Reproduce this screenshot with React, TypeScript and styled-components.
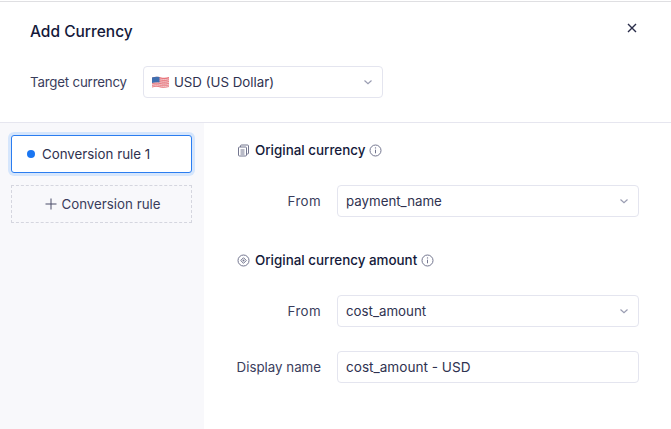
import React from "react";
import styled, { createGlobalStyle } from "styled-components";

const Global = createGlobalStyle`
  html, body { margin: 0; padding: 0; background: #fff; }
  body { font-family: Inter, "Liberation Sans", sans-serif; color: #2f3250; }
  * { box-sizing: border-box; }
`;

const Page = styled.div`
  width: 671px;
  height: 429px;
  overflow: hidden;
  padding-top: 1px;
  display: flex;
  flex-direction: column;
`;

const Header = styled.header`
  height: 122px;
  flex: none;
  border-top: 1px solid #dfdfe2;
  border-bottom: 1px solid #e6e6ef;
  padding: 20px 30px 0;
  position: relative;
`;

const Title = styled.h1`
  margin: 0;
  font-size: 15.5px;
  line-height: 20px;
  font-weight: 500;
  color: #14193a;
`;

const TargetRow = styled.div`
  display: flex;
  align-items: center;
  margin-top: 24px;
  gap: 16px;
`;

const Label = styled.span<{ $spacing?: number }>`
  font-size: 13.3px;
  line-height: 20px;
  color: #3a3d5c;
  white-space: nowrap;
  letter-spacing: ${(p) => p.$spacing ?? 0}px;
`;

const Close = styled.button`
  position: absolute;
  right: 32px;
  top: 19px;
  width: 14px;
  height: 14px;
  padding: 0;
  border: none;
  background: none;
  display: flex;
`;

const Select = styled.div<{ $width: number }>`
  width: ${(p) => p.$width}px;
  height: 32px;
  border: 1px solid #e4e5ef;
  border-radius: 4px;
  background: #fff;
  display: flex;
  align-items: center;
  padding: 0 8px;
  font-size: 13.3px;
  color: #2f3250;
  gap: 5px;
`;

const SelectText = styled.span`
  flex: 1;
  white-space: nowrap;
`;

const Body = styled.div`
  flex: 1;
  display: flex;
  min-height: 0;
`;

const Sidebar = styled.aside`
  width: 204px;
  flex: none;
  background: #f8f8fb;
  padding: 12px 12px 0 11px;
`;

const RuleCard = styled.div`
  height: 38px;
  width: 181px;
  border: 1px solid #2b7df0;
  border-radius: 3px;
  box-shadow: 0 0 0 3px #d6e6fc;
  background: #fff;
  display: flex;
  align-items: center;
  padding-left: 15px;
  gap: 7px;
  font-size: 13.3px;
  color: #2f3250;
`;

const Dot = styled.span`
  width: 8px;
  height: 8px;
  border-radius: 50%;
  background: #1a76f2;
`;

const AddRule = styled.div`
  margin-top: 12px;
  height: 38px;
  width: 181px;
  border: 1px dashed #d5d6df;
  display: flex;
  align-items: center;
  justify-content: center;
  gap: 5px;
  padding-left: 2px;
  font-size: 13.3px;
  color: #3a3d5c;
`;

const Content = styled.main`
  flex: 1;
  padding: 17px 32px 0 32px;
`;

const SectionHead = styled.div<{ $top?: number }>`
  display: flex;
  align-items: center;
  height: 20px;
  margin-top: ${(p) => p.$top ?? 0}px;
  font-size: 13.4px;
  font-weight: 500;
  color: #14193a;
`;

const SectionIcon = styled.svg`
  width: 13px;
  height: 13px;
  margin-left: 1px;
  margin-right: 5px;
  flex: none;
`;

const InfoIcon = styled.svg`
  width: 13px;
  height: 13px;
  margin-left: 4px;
  flex: none;
`;

const Field = styled.div<{ $top: number }>`
  display: grid;
  grid-template-columns: 85px 302px;
  column-gap: 16px;
  align-items: center;
  margin-top: ${(p) => p.$top}px;
`;

const FieldLabel = styled(Label)`
  text-align: right;
`;

const Input = styled.div`
  height: 32px;
  border: 1px solid #e4e5ef;
  border-radius: 4px;
  background: #fff;
  display: flex;
  align-items: center;
  padding: 0 8px;
  font-size: 13.6px;
  color: #2f3250;
`;

const Chevron = () => (
  <svg width="10" height="10" viewBox="0 0 10 10" fill="none" style={{ marginRight: 1 }}>
    <path d="M1.500 3.500 5 6.800l3.500-3.300" stroke="#9a9db2" strokeWidth="1.200" />
  </svg>
);

const Info = () => (
  <InfoIcon viewBox="0 0 13 13" fill="none">
    <circle cx="6.500" cy="6.500" r="5.500" stroke="#73768f" />
    <path d="M6.500 5.700v3.600" stroke="#73768f" />
    <circle cx="6.500" cy="3.900" r=".7" fill="#73768f" />
  </InfoIcon>
);

const Flag = () => (
  <svg width="17" height="13" viewBox="0 0 17 13">
    <path d="M0 1.500C3 .5 6 .5 8.500 1.200S14 2 17 1v10c-3 1-6 1-8.500.4S3 10.500 0 11.500z" fill="#e8737a" />
    <path d="M0 3.300c3-1 6-.8 8.500-.2S14 3.800 17 2.800M0 5.100c3-1 6-.8 8.500-.2S14 5.600 17 4.600M0 6.900c3-1 6-.8 8.500-.2S14 7.400 17 6.400M0 8.700c3-1 6-.8 8.500-.2S14 9.200 17 8.200M0 10.300c3-1 6-.8 8.500-.2S14 10.800 17 9.800" stroke="#f3d9dc" strokeWidth=".8" fill="none" />
    <path d="M0 1.500C2.500.7 5 .6 7.500 1v5.600C5 6.200 2.500 6.300 0 7.100z" fill="#3f6fb0" />
  </svg>
);

export default function App() {
  return (
    <Page>
      <Global />
      <Header>
        <Title>Add Currency</Title>
        <Close aria-label="Close">
          <svg width="14" height="14" viewBox="0 0 14 14" fill="none">
            <path d="M3 3l8 8M11 3l-8 8" stroke="#2a2d4a" strokeWidth="1.400" />
          </svg>
        </Close>
        <TargetRow>
          <Label $spacing={-0.19}>Target currency</Label>
          <Select $width={240}>
            <Flag />
            <SelectText>USD (US Dollar)</SelectText>
            <Chevron />
          </Select>
        </TargetRow>
      </Header>
      <Body>
        <Sidebar>
          <RuleCard>
            <Dot />
            Conversion rule 1
          </RuleCard>
          <AddRule>
            <svg width="12" height="12" viewBox="0 0 12 12" fill="none">
              <path d="M6 .5v11M.5 6h11" stroke="#4a4d68" />
            </svg>
            Conversion rule
          </AddRule>
        </Sidebar>
        <Content>
          <SectionHead>
            <SectionIcon viewBox="0 0 13 13" fill="none">
              <rect x="3.500" y="1" width="8" height="9" rx="1" stroke="#73768f" />
              <rect x="1.500" y="3" width="8" height="9" rx="1" fill="#fff" stroke="#73768f" />
              <path d="M3.500 6h4M3.500 8h4M3.500 10h4" stroke="#73768f" />
            </SectionIcon>
            Original currency
            <Info />
          </SectionHead>
          <Field $top={25}>
            <FieldLabel $spacing={0.4}>From</FieldLabel>
            <Select $width={302}>
              <SelectText>payment_name</SelectText>
              <Chevron />
            </Select>
          </Field>
          <SectionHead $top={33}>
            <SectionIcon viewBox="0 0 13 13" fill="none">
              <circle cx="6.500" cy="6.500" r="5.500" stroke="#73768f" />
              <path d="M6.500 3.700 9.300 6.500 6.500 9.300 3.700 6.500z" stroke="#73768f" />
              <circle cx="6.500" cy="6.500" r="1" fill="#73768f" />
            </SectionIcon>
            Original currency amount
            <Info />
          </SectionHead>
          <Field $top={25}>
            <FieldLabel $spacing={0.4}>From</FieldLabel>
            <Select $width={302}>
              <SelectText>cost_amount</SelectText>
              <Chevron />
            </Select>
          </Field>
          <Field $top={24}>
            <FieldLabel>Display name</FieldLabel>
            <Input>cost_amount - USD</Input>
          </Field>
        </Content>
      </Body>
    </Page>
  );
}
